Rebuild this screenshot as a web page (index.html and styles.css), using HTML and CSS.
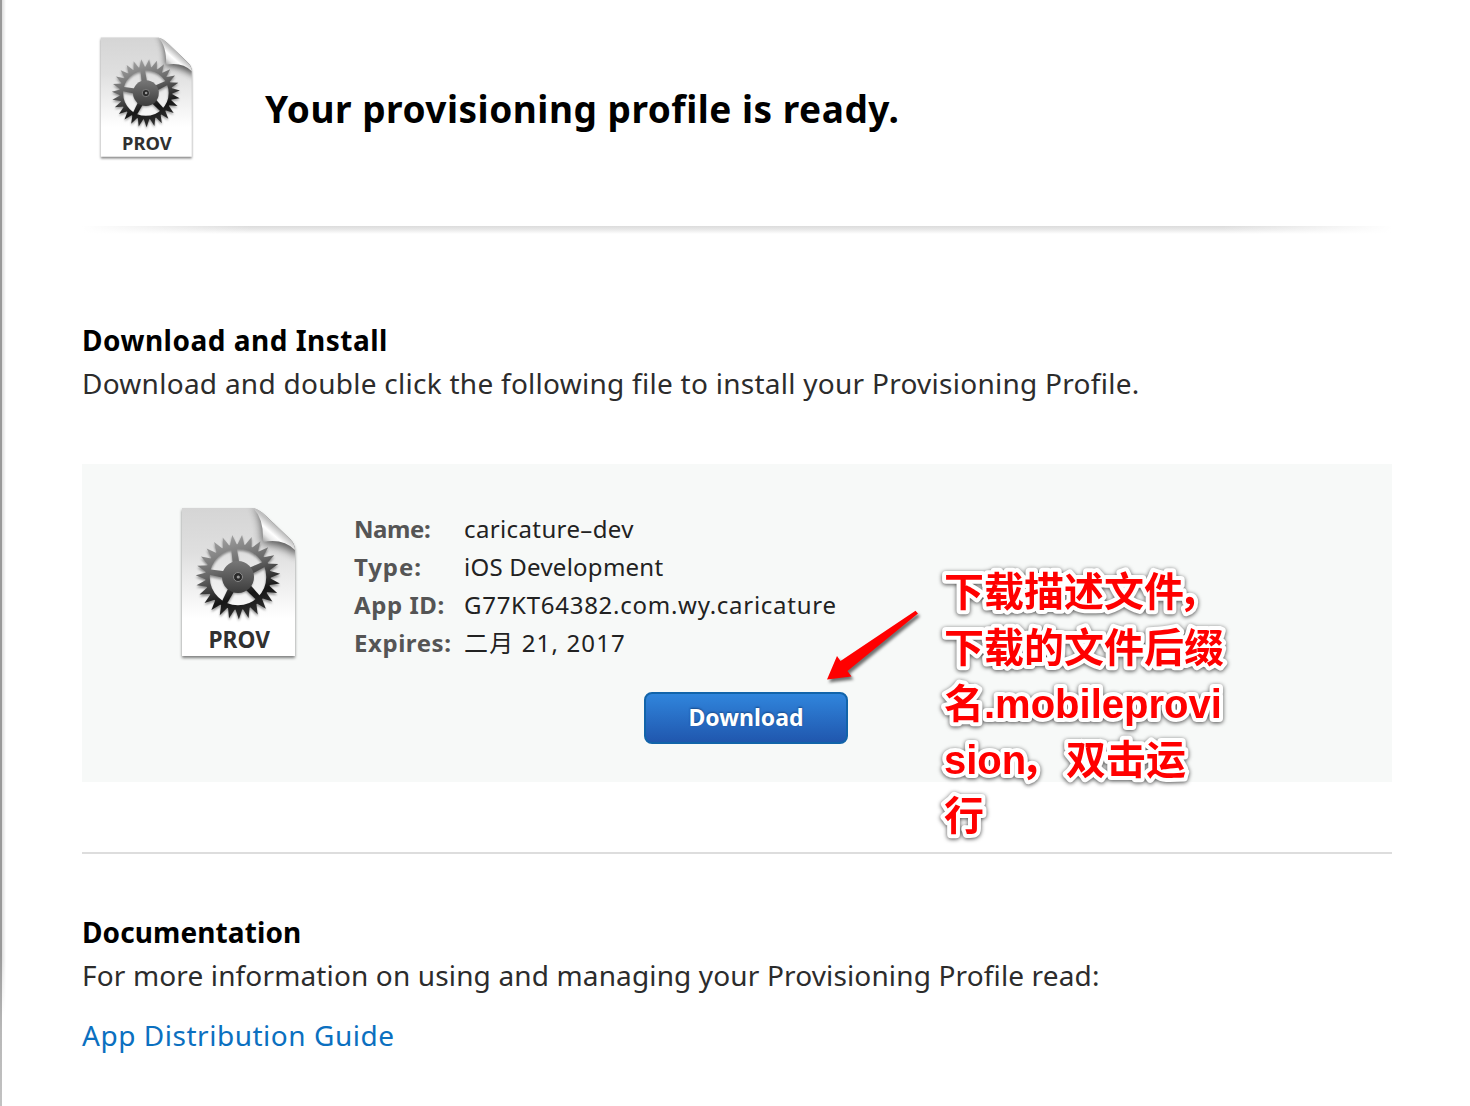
FILE: index.html
```html
<!DOCTYPE html>
<html lang="en">
<head>
<meta charset="utf-8">
<title>Your provisioning profile is ready.</title>
<link rel="stylesheet" href="styles.css">
</head>
<body>
<svg class="defs" width="0" height="0" aria-hidden="true">
  <defs>
    <linearGradient id="paper" x1="0" y1="0" x2="0" y2="1"><stop offset="0" stop-color="#d5d5d5"/><stop offset=".3" stop-color="#dfdfdf"/><stop offset=".75" stop-color="#fff"/></linearGradient>
    <linearGradient id="metal" gradientUnits="userSpaceOnUse" x1="58" y1="42" x2="84" y2="124"><stop offset="0" stop-color="#a0a0a0"/><stop offset=".38" stop-color="#666"/><stop offset=".72" stop-color="#161616"/><stop offset="1" stop-color="#333"/></linearGradient>
    <linearGradient id="hub" x1="0" y1="0" x2="0" y2="1"><stop offset="0" stop-color="#777"/><stop offset="1" stop-color="#3c3c3c"/></linearGradient>
    <linearGradient id="curl" gradientUnits="userSpaceOnUse" x1="98" y1="49" x2="112" y2="33"><stop offset="0" stop-color="#8f8f8f"/><stop offset=".4" stop-color="#e8e8e8"/><stop offset=".65" stop-color="#fff"/><stop offset="1" stop-color="#c0c0c0"/></linearGradient>
    <filter id="blur" x="-50%" y="-50%" width="200%" height="200%"><feGaussianBlur stdDeviation="4"/></filter>
    <clipPath id="sheet"><path d="M17 13H88Q94 14 101 21L125 44Q130 49 130 55V161H17Z"/></clipPath>
    <path id="tooth" d="M-3.900-31L.4-42.300 3.900-31Z"/>
    <g id="teeth3"><use href="#tooth"/><use href="#tooth" transform="rotate(13.333)"/><use href="#tooth" transform="rotate(26.667)"/></g>
    <g id="teeth9"><use href="#teeth3"/><use href="#teeth3" transform="rotate(40)"/><use href="#teeth3" transform="rotate(80)"/></g>
    <mask id="gear" maskUnits="userSpaceOnUse" x="25" y="35" width="96" height="96">
      <g transform="translate(73 82)" fill="#fff">
        <g transform="rotate(5)"><use href="#teeth9"/><use href="#teeth9" transform="rotate(120)"/><use href="#teeth9" transform="rotate(240)"/></g>
        <circle r="30.500" fill="none" stroke="#fff" stroke-width="4.500"/>
        <circle r="15"/>
        <g transform="rotate(-8)"><path id="spoke" d="M-2.700-30H2.700L3.400-12H-3.400Z"/><use href="#spoke" transform="rotate(72)"/><use href="#spoke" transform="rotate(144)"/><use href="#spoke" transform="rotate(216)"/><use href="#spoke" transform="rotate(288)"/></g>
      </g>
    </mask>
    <symbol id="prov" viewBox="0 0 150 175">
      <path class="sheet" d="M17 13H88Q94 14 101 21L125 44Q130 49 130 55V161H17Z" fill="url(#paper)"/>
      <g clip-path="url(#sheet)"><path d="M88 8Q98 22 97 48Q120 50 134 62L138 40Z" fill="#000" opacity=".6" filter="url(#blur)"/></g>
      <g class="gear"><rect x="25" y="35" width="96" height="96" fill="url(#metal)" mask="url(#gear)"/></g>
      <circle cx="73" cy="82" r="16" fill="url(#hub)"/>
      <circle cx="73" cy="82" r="4.500" fill="#292929" stroke="#8b8b8b" stroke-width="1"/>
      <circle cx="73.300" cy="82" r="1.600" fill="#999"/>
      <path d="M88 13Q99 23 98 47Q118 43 130 55Q130 49 125 44L101 21Q94 14 88 13Z" fill="url(#curl)"/>
      <text class="prov-text" x="43.500" y="153" textLength="61.500" lengthAdjust="spacingAndGlyphs">PROV</text>
    </symbol>
  </defs>
</svg>
<main class="page">
  <header class="intro">
    <svg class="icon-small"><use href="#prov"/></svg>
    <h1>Your provisioning profile is ready.</h1>
  </header>
  <div class="divider"></div>
  <section class="install">
    <h2>Download and Install</h2>
    <p class="lead">Download and double click the following file to install your Provisioning Profile.</p>
    <div class="card">
      <svg class="icon-large"><use href="#prov"/></svg>
      <div class="info">
        <dl>
          <dt class="label-name">Name:</dt><dd class="name">caricature–dev</dd>
          <dt class="label-type">Type:</dt><dd class="type">iOS Development</dd>
          <dt>App ID:</dt><dd class="app-id">G77KT64382.com.wy.caricature</dd>
          <dt>Expires:</dt><dd class="expires">二月 21, 2017</dd>
        </dl>
        <button class="download" type="button">Download</button>
      </div>
      <svg class="arrow" viewBox="0 0 110 90"><path d="M7 69.500L17 46 20.500 51 95.500 .8 98 3.500 27.500 61 31.500 66.500Z"/></svg>
      <svg class="note" viewBox="0 0 300 290">
        <text x="0" y="42">下载描述文件<tspan class="comma">，</tspan></text>
        <text x="0" y="98">下载的文件后缀</text>
        <text x="0" y="154">名.mobileprovi</text>
        <text x="0" y="210">sion<tspan class="comma">，</tspan><tspan x="122">双击运</tspan></text>
        <text x="0" y="266">行</text>
      </svg>
    </div>
  </section>
  <section class="docs">
    <h2 class="doc-title">Documentation</h2>
    <p class="more">For more information on using and managing your Provisioning Profile read:</p>
    <a class="guide">App Distribution Guide</a>
  </section>
</main>
</body>
</html>
```
FILE: styles.css
```css
* { box-sizing: border-box; }
body {
  margin: 0;
  height: 1106px;
  overflow: hidden;
  background: #fff;
  color: #2c2c2c;
  font-family: "Noto Sans", "Noto Sans CJK SC", sans-serif;
}
.defs { position: absolute; }
.page {
  height: 1106px;
  padding: 0 78px 0 82px;
  background:
    linear-gradient(#999 0 955px, #b8b8b8 1030px, #c2c2c2) 0 0 / 2px 100% no-repeat,
    linear-gradient(transparent 960px, #fff 1015px) 2px 0 / 5px 100% no-repeat,
    linear-gradient(90deg, #ddd, #fff) 2px 0 / 4px 100% no-repeat,
    #fff;
}
h1, h2, p, dl, dd { margin: 0; }
h1, h2, .lead, .more, .guide, dt, dd { white-space: nowrap; }
.intro { display: flex; height: 226px; padding-left: 5px; }
.icon-small { width: 121px; height: 141px; margin-top: 26.5px; }
h1 {
  margin: 84px 0 0 57px;
  font-size: 37px;
  line-height: 50px;
  letter-spacing: .51px;
  color: #000;
}
.divider {
  height: 8px;
  background:
    linear-gradient(90deg, #fff, transparent 13%, transparent 87%, #fff),
    linear-gradient(#dcdcdc, #e6e6e6 3px, #fff 8px);
}
h2 {
  color: #000;
  font-size: 28px;
  line-height: 40px;
  letter-spacing: .5px;
}
.doc-title { letter-spacing: .1px; }
.install { height: 620px; padding-top: 86px; border-bottom: 2px solid #ddd; }
.lead, .more { font-size: 28px; line-height: 40px; margin-top: 3px; letter-spacing: .265px; }
.more { letter-spacing: .14px; }
.card {
  display: flex;
  height: 318px;
  margin-top: 61px;
  padding-left: 83px;
  background: #f7f9f8;
}
.icon-large { flex: none; width: 150px; height: 175px; margin-top: 31px; }
.info { width: 494px; margin-left: 39px; flex: none; padding-top: 46px; }
dl { display: grid; grid-template-columns: 110px 1fr; grid-auto-rows: 38px; font-size: 24px; line-height: 38px; }
dt { font-weight: 700; color: #555; letter-spacing: .55px; }
.label-name { letter-spacing: -.4px; }
.label-type { letter-spacing: .9px; }
dd { color: #222; }
.name { letter-spacing: .38px; }
.type { letter-spacing: .25px; }
.app-id { letter-spacing: .73px; }
.expires { letter-spacing: 1.15px; }
.download {
  display: block;
  width: 204px;
  height: 52px;
  margin: 30px 0 0 290px;
  padding: 0 0 2px;
  border: 2px solid #1264aa;
  border-radius: 8px;
  background: linear-gradient(#3085dc, #2057ae);
  color: #fff;
  font: 700 23px "Noto Sans", sans-serif;
  text-shadow: 0 -1px 2px #164987;
}
.arrow {
  flex: none;
  width: 110px;
  height: 90px;
  margin: 146px 0 0 -28px;
  overflow: visible;
  fill: #f00;
  filter: drop-shadow(2px 3px 1.5px rgba(0, 0, 0, .55));
}
.note {
  flex: none;
  width: 300px;
  height: 290px;
  margin: 100px 0 0 14px;
  overflow: visible;
  fill: #f00;
  font: 700 40px "Liberation Sans", "Noto Sans CJK SC", sans-serif;
  stroke: #fff;
  stroke-width: 8px;
  stroke-linejoin: round;
  paint-order: stroke fill;
  filter: drop-shadow(0 1px 2px rgba(0, 0, 0, .7));
}
.comma { font-feature-settings: "palt"; }
.docs { padding-top: 58px; }
.guide { display: block; margin-top: 20px; font-size: 28px; line-height: 40px; color: #0b70c0; letter-spacing: .53px; }
.sheet { filter: drop-shadow(0 2px 1.5px rgba(0, 0, 0, .5)); }
.gear { filter: drop-shadow(0 2px 1px rgba(0, 0, 0, .4)); }
.prov-text { font: 700 23px "Noto Sans", sans-serif; fill: #303030; }
```
